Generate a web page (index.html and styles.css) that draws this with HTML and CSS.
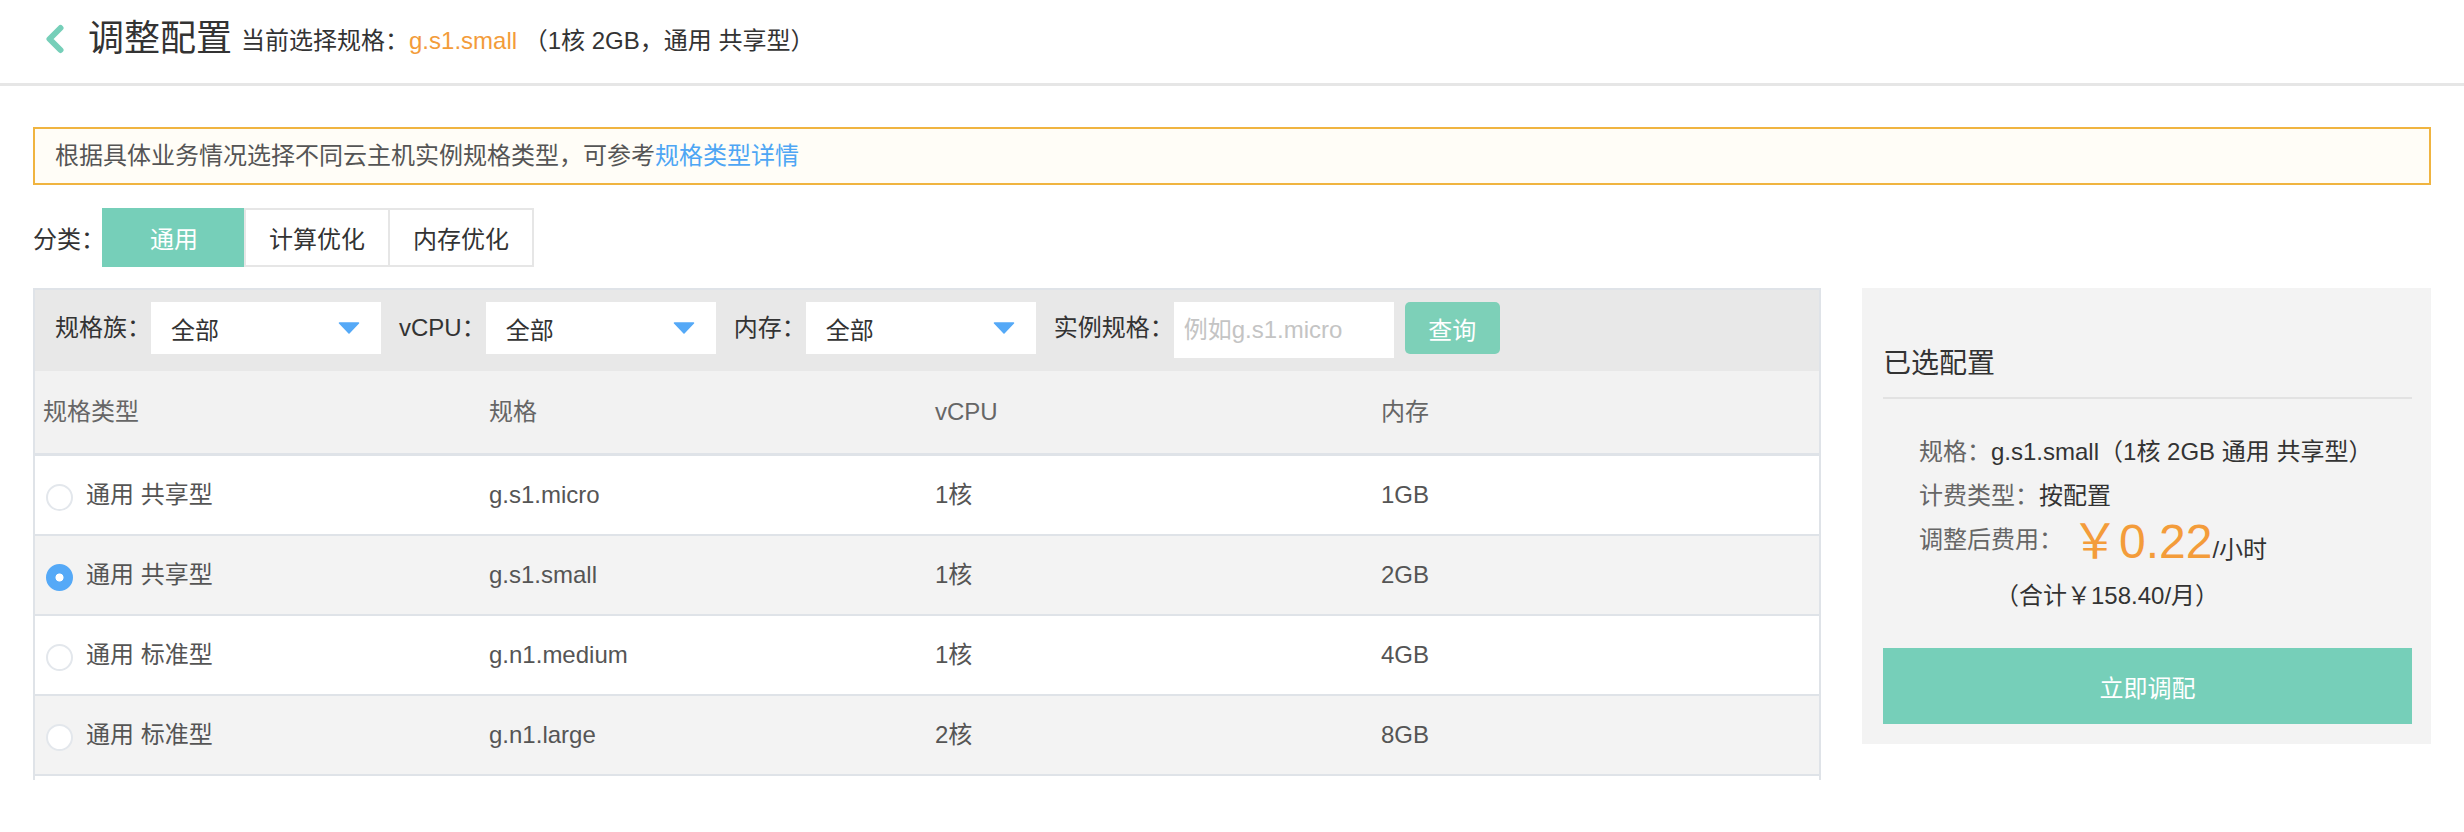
FILE: index.html
```html
<!DOCTYPE html>
<html lang="zh-CN">
<head>
<meta charset="utf-8">
<title>调整配置</title>
<link rel="stylesheet" href="styles.css">
</head>
<body>
<header class="topbar">
  <svg class="back" viewBox="0 0 22 30" width="22" height="30" aria-hidden="true"><path d="M17.5 4 L6.5 15 L17.5 26" fill="none" stroke="#76cfb9" stroke-width="6" stroke-linecap="round" stroke-linejoin="round"/></svg>
  <h1 class="title">调整配置</h1>
  <span class="current">当前选择规格：<span class="spec">g.s1.small</span> （1核 2GB，通用 共享型）</span>
</header>
<main class="page">
  <div class="notice">根据具体业务情况选择不同云主机实例规格类型，可参考<a class="link">规格类型详情</a></div>
  <div class="category">
    <span class="cat-label">分类：</span>
    <div class="tabs">
      <span class="tab active">通用</span>
      <span class="tab">计算优化</span>
      <span class="tab">内存优化</span>
    </div>
  </div>
  <div class="content">
    <section class="table-wrap">
      <div class="filters">
        <span class="f-label">规格族：</span>
        <div class="select"><span>全部</span><svg class="caret" viewBox="0 0 22 12" width="22" height="12"><path d="M1.5 1 H20.5 L11 11 Z" fill="#55a9f7" stroke="#55a9f7" stroke-width="1.5" stroke-linejoin="round"/></svg></div>
        <span class="f-label">vCPU：</span>
        <div class="select"><span>全部</span><svg class="caret" viewBox="0 0 22 12" width="22" height="12"><path d="M1.5 1 H20.5 L11 11 Z" fill="#55a9f7" stroke="#55a9f7" stroke-width="1.5" stroke-linejoin="round"/></svg></div>
        <span class="f-label">内存：</span>
        <div class="select"><span>全部</span><svg class="caret" viewBox="0 0 22 12" width="22" height="12"><path d="M1.5 1 H20.5 L11 11 Z" fill="#55a9f7" stroke="#55a9f7" stroke-width="1.5" stroke-linejoin="round"/></svg></div>
        <span class="f-label">实例规格：</span>
        <input class="search" type="text" placeholder="例如g.s1.micro">
        <span class="btn-query">查询</span>
      </div>
      <div class="thead">
        <span>规格类型</span><span>规格</span><span>vCPU</span><span>内存</span>
      </div>
      <div class="tbody">
        <div class="row"><span class="type"><i class="radio"></i>通用 共享型</span><span>g.s1.micro</span><span>1核</span><span>1GB</span></div>
        <div class="row alt"><span class="type"><i class="radio checked"></i>通用 共享型</span><span>g.s1.small</span><span>1核</span><span>2GB</span></div>
        <div class="row"><span class="type"><i class="radio"></i>通用 标准型</span><span>g.n1.medium</span><span>1核</span><span>4GB</span></div>
        <div class="row alt"><span class="type"><i class="radio"></i>通用 标准型</span><span>g.n1.large</span><span>2核</span><span>8GB</span></div>
      </div>
    </section>
    <aside class="summary">
      <h2 class="sum-title">已选配置</h2>
      <div class="sum-info">
        <p class="line"><span class="k">规格：</span>g.s1.small（1核 2GB 通用 共享型）</p>
        <p class="line"><span class="k">计费类型：</span>按配置</p>
        <p class="line price-line"><span class="k">调整后费用：</span><span class="price"><span class="amount">￥0.22</span>/小时</span></p>
        <p class="line total">（合计￥158.40/月）</p>
      </div>
      <div class="btn-apply">立即调配</div>
    </aside>
  </div>
</main>
</body>
</html>
```

FILE: styles.css
```css
* { box-sizing: border-box; }

body {
  margin: 0;
  background: #fff;
  color: #333;
  font-family: "Liberation Sans", "Noto Sans CJK SC", sans-serif;
  font-size: 24px;
}

.topbar {
  display: flex;
  align-items: center;
  height: 86px;
  padding: 0 0 6px 43px;
  border-bottom: 3px solid #e6e6e6;
}

.back {
  display: block;
  flex: none;
}

.title {
  margin: 0 0 0 23px;
  font-size: 36px;
  font-weight: normal;
  line-height: 48px;
  color: #333;
}

.current {
  margin-left: 9px;
  font-size: 24px;
  line-height: 48px;
  color: #333;
  padding-top: 4px;
}

.spec { color: #f39c3a; }

.page {
  padding: 0 33px;
}

.notice {
  margin-top: 41px;
  height: 58px;
  border: 2px solid #f0b440;
  background: #fffdf7;
  padding: 0 20px;
  line-height: 54px;
  color: #555;
}

.link {
  color: #4ea6f4;
  cursor: pointer;
}

.category {
  display: flex;
  align-items: center;
  margin-top: 23px;
}

.cat-label {
  white-space: nowrap;
  margin-right: -3px;
  color: #333;
}

.tabs {
  display: flex;
}

.tab {
  width: 146px;
  height: 59px;
  border: 2px solid #e6e6e6;
  display: flex;
  align-items: center;
  justify-content: center;
  color: #333;
  white-space: nowrap;
}

.tab + .tab { margin-left: -2px; }

.tab.active {
  background: #76cfb9;
  border-color: #76cfb9;
  color: #fff;
  width: 144px;
}

.content {
  display: grid;
  grid-template-columns: 1fr 569px;
  column-gap: 41px;
  align-items: start;
  margin-top: 21px;
}

.table-wrap {
  border: 2px solid #dfe3e8;
  border-bottom: none;
}

.filters {
  display: flex;
  align-items: flex-start;
  background: #e8e8e8;
  padding: 12px 20px 13px;
}

.f-label {
  line-height: 52px;
  color: #333;
  white-space: nowrap;
}

.select {
  width: 230px;
  height: 52px;
  background: #fff;
  display: flex;
  align-items: center;
  justify-content: space-between;
  padding: 0 21px 0 20px;
  margin-right: 18px;
  color: #333;
}

.caret { display: block; }

.search {
  width: 220px;
  height: 56px;
  border: none;
  outline: none;
  background: #fff;
  padding: 0 10px;
  margin: 0 11px 0 0;
  font-family: inherit;
  font-size: 24px;
  color: #333;
}

.search::placeholder { color: #c4c4c4; }

.btn-query {
  width: 95px;
  height: 52px;
  border-radius: 5px;
  background: #7dd0b8;
  color: #fff;
  display: flex;
  align-items: center;
  justify-content: center;
}

.thead,
.row {
  display: grid;
  grid-template-columns: repeat(4, 1fr);
}

.thead {
  height: 85px;
  line-height: 82px;
  background: #f2f2f2;
  border-bottom: 3px solid #dfe3e8;
  color: #666;
}

.thead span,
.row span {
  padding-left: 8px;
}

.tbody {
  padding-bottom: 4px;
  background: #fff;
}

.row {
  height: 80px;
  border-bottom: 2px solid #dfe3e8;
  background: #fff;
  color: #555;
  line-height: 78px;
}

.row.alt { background: #f3f3f3; }

.row .type {
  display: flex;
  align-items: center;
}

.radio {
  width: 27px;
  height: 27px;
  border-radius: 50%;
  border: 2px solid #e3e7ec;
  background: #fff;
  margin: 4px 13px 0 3px;
  flex: none;
}

.radio.checked {
  border-color: #55a9f7;
  background: radial-gradient(circle, #fff 0 3.6px, #55a9f7 4.4px);
}

.summary {
  background: #f3f3f3;
  padding: 56px 19px 20px 21px;
}

.sum-title {
  margin: 0;
  font-size: 28px;
  font-weight: normal;
  line-height: 40px;
  padding-bottom: 13px;
  border-bottom: 2px solid #e2e2e2;
  color: #333;
}

.sum-info {
  margin-top: 31px;
  padding-left: 36px;
}

.line {
  margin: 0;
  line-height: 44px;
  color: #333;
  white-space: nowrap;
}

.line .k { color: #666; }

.price-line {
  margin-bottom: 12px;
}

.price {
  vertical-align: -10px;
  line-height: 0;
  margin-left: 8px;
  color: #333;
}

.amount {
  font-size: 48px;
  line-height: 0;
  color: #f39c3a;
}

.total {
  padding-left: 76px;
}

.btn-apply {
  margin-top: 30px;
  height: 76px;
  background: #76cfb9;
  color: #fff;
  display: flex;
  align-items: center;
  justify-content: center;
}
```
